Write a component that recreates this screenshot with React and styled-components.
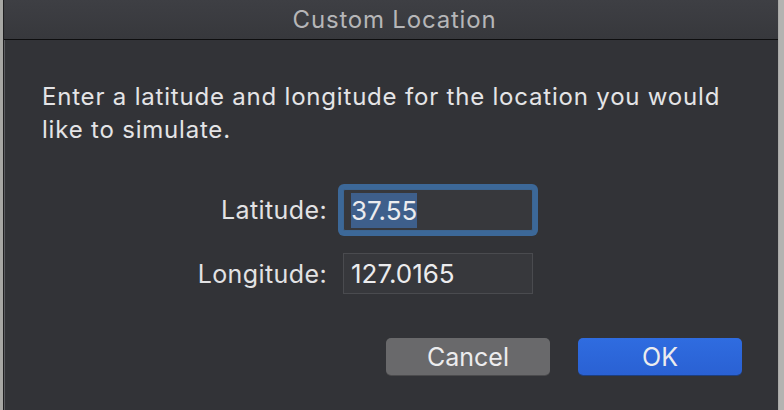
import React from "react";
import styled, { createGlobalStyle } from "styled-components";

const GlobalStyle = createGlobalStyle`
  html, body {
    margin: 0;
    padding: 0;
    background: #a3a3a0;
    font-family: Inter, "Noto Sans", "Liberation Sans", sans-serif;
  }
`;

const Screen = styled.div`
  width: 784px;
  height: 410px;
  overflow: hidden;
  display: flex;
  background: linear-gradient(to right, #a7a7a4 0, #a7a7a4 777px, #8e8e8c 777px, #b3b3b1 779px);
`;

const Window = styled.div`
  margin-left: 3px;
  width: 774px;
  height: 410px;
  display: flex;
  flex-direction: column;
  background: #323337;
  border-left: 1px solid #1e1e20;
  box-shadow: inset 1px 0 0 #5a5b5f;
  border-top-right-radius: 6px;
`;

const TitleBar = styled.div`
  height: 39px;
  flex-shrink: 0;
  display: flex;
  align-items: center;
  justify-content: center;
  padding-left: 7px;
  background: linear-gradient(#3e3f44, #37383c);
  border-bottom: 1px solid #0e0e0f;
  color: #b6b6b8;
  font-size: 24px;
  letter-spacing: 0.8px;
`;

const Content = styled.div`
  padding: 40px 0 0 38px;
  display: flex;
  flex-direction: column;
`;

const Message = styled.p`
  margin: 0;
  width: 700px;
  color: #e4e4e6;
  font-size: 24px;
  letter-spacing: 0.8px;
  line-height: 33px;
`;

const Form = styled.div`
  margin-top: 43px;
  display: grid;
  grid-template-columns: 285px 190px;
  column-gap: 16px;
  row-gap: 22px;
  align-items: center;
`;

const Label = styled.label`
  text-align: right;
  color: #e2e2e4;
  font-size: 25px;
  letter-spacing: 0.4px;
`;

const Field = styled.div`
  height: ${p => (p.$focused ? 42 : 41)}px;
  box-sizing: border-box;
  display: flex;
  align-items: center;
  padding-left: 7px;
  background: #37383c;
  border: 1px solid ${p => (p.$focused ? "#3c6591" : "#4a4b4f")};
  border-radius: ${p => (p.$focused ? "2px" : "0")};
  box-shadow: ${p => (p.$focused ? "0 0 0 5px #3c6898" : "none")};
  color: #ececee;
  font-size: 26px;
`;

const Selected = styled.span`
  background: #3e5f8b;
  padding: 2px 0;
`;

const Buttons = styled.div`
  margin-top: 44px;
  display: flex;
  justify-content: flex-end;
  gap: 28px;
  padding-right: 36px;
`;

const Button = styled.div`
  width: 164px;
  height: 37px;
  box-sizing: border-box;
  border-radius: 5px;
  display: flex;
  align-items: center;
  justify-content: center;
  font-size: 25px;
  color: #ececee;
  background: ${p => (p.$primary ? "linear-gradient(#2f6ce0, #2a61d3)" : "#69696b")};
  box-shadow: ${p => (p.$primary ? "0 1px 0 #1d3f80" : "0 1px 0 #4b4b4d")};
`;

export default function App() {
  return (
    <>
      <GlobalStyle />
      <Screen>
        <Window>
          <TitleBar>Custom Location</TitleBar>
          <Content>
            <Message>
              Enter a latitude and longitude for the location you would like to simulate.
            </Message>
            <Form>
              <Label>Latitude:</Label>
              <Field $focused>
                <Selected>37.55</Selected>
              </Field>
              <Label>Longitude:</Label>
              <Field>127.0165</Field>
            </Form>
            <Buttons>
              <Button>Cancel</Button>
              <Button $primary>OK</Button>
            </Buttons>
          </Content>
        </Window>
      </Screen>
    </>
  );
}
